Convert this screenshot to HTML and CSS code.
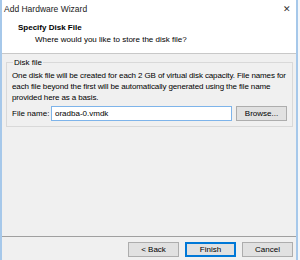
FILE: index.html
```html
<!DOCTYPE html>
<html lang="en">
<head>
    <meta charset="UTF-8">
    <title>Add Hardware Wizard</title>
    <link rel="stylesheet" href="styles.css">
</head>
<body>
    <div class="window">
        <div class="titlebar">
            <span class="title">Add Hardware Wizard</span>
            <span class="close">&#x2715;</span>
        </div>
        <header class="page-head">
            <div class="head-title">Specify Disk File</div>
            <div class="head-sub">Where would you like to store the disk file?</div>
        </header>
        <main class="content">
            <fieldset class="group">
                <legend>Disk file</legend>
                <p class="info">One disk file will be created for each 2 GB of virtual disk capacity. File names for each file beyond the first will be automatically generated using the file name provided here as a basis.</p>
                <div class="file-row">
                    <label for="fileName">File name:</label>
                    <input type="text" id="fileName" value="oradba-0.vmdk">
                    <button class="btn browse">Browse...</button>
                </div>
            </fieldset>
        </main>
        <footer class="actions">
            <button class="btn">&lt; Back</button>
            <button class="btn default">Finish</button>
            <button class="btn">Cancel</button>
        </footer>
    </div>
</body>
</html>
```

FILE: styles.css
```css
* {
    margin: 0;
    padding: 0;
    box-sizing: border-box;
}

body {
    background-color: #f4f7fa;
    font-family: 'Liberation Sans', Arial, sans-serif;
    font-size: 8px;
    color: #000000;
    width: 300px;
    height: 260px;
    overflow: hidden;
}

.window {
    width: 298px;
    height: 260px;
    background-color: #f0f0f0;
    border-left: 2px solid #a6c8ea;
    border-right: 2px solid #a6c8ea;
    display: flex;
    flex-direction: column;
}

.titlebar {
    background-color: #ffffff;
    height: 18px;
    display: flex;
    align-items: center;
    justify-content: space-between;
    padding: 0 5px 0 2px;
}

.title {
    font-size: 8.5px;
    color: #1a1a1a;
}

.close {
    font-size: 9px;
    color: #333333;
}

.page-head {
    background-color: #ffffff;
    height: 36px;
    border-bottom: 1px solid #c8c8c8;
    padding: 4px 0 0 16px;
}

.head-title {
    font-weight: bold;
    line-height: 11px;
}

.head-sub {
    padding-left: 17px;
    margin-top: 1px;
    line-height: 11px;
}

.content {
    height: 182px;
    padding: 3px 3px 0 4px;
}

.group {
    border: 1px solid #d9d9d9;
    padding: 2px 5px 5px 5px;
}

.group legend {
    padding: 0 1px;
    margin-left: 1px;
    line-height: 11px;
}

.info {
    line-height: 11px;
    letter-spacing: -0.12px;
    margin-bottom: 3px;
}

.file-row {
    display: flex;
    align-items: center;
}

.file-row label {
    width: 39px;
}

.file-row input {
    width: 181px;
    height: 15px;
    border: 1px solid #7eb4ea;
    font-family: inherit;
    font-size: 8px;
    padding: 0 3px;
    outline: none;
}

.btn {
    background-color: #e1e1e1;
    border: 1px solid #adadad;
    font-family: inherit;
    font-size: 8px;
    color: #000000;
    height: 15px;
    width: 51px;
}

.browse {
    margin-left: 4px;
}

.actions {
    border-top: 1px solid #a0a0a0;
    display: flex;
    justify-content: flex-end;
    gap: 6px;
    padding: 5px 3px 0 0;
    flex: 1;
}

.btn.default {
    border-color: #0078d7;
    border-width: 2px;
}
```
